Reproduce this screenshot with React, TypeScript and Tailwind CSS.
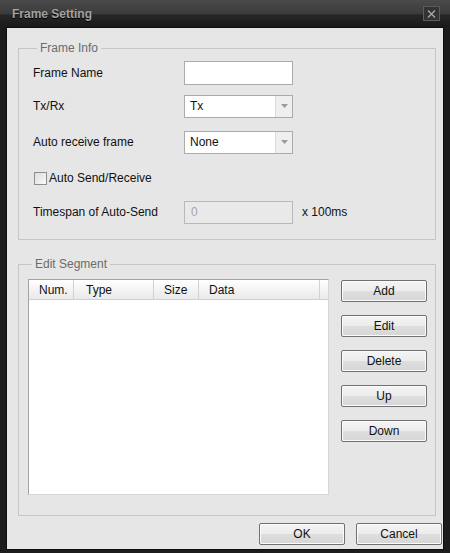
import React, { useState } from "react";

const font = { fontFamily: '"Liberation Sans", Arial, sans-serif' };

function WinButton({ label, className = "" }: { label: string; className?: string }) {
  return (
    <button
      className={`h-[22px] w-[86px] border border-[#707070] rounded-[2px] bg-[linear-gradient(to_bottom,#f4f4f4_0%,#ececec_50%,#dedede_51%,#d6d6d6_100%)] shadow-[inset_0_0_0_1px_#fbfbfb] text-[12px] text-[#111] leading-none ${className}`}
    >
      {label}
    </button>
  );
}

function ComboBox({ value }: { value: string }) {
  return (
    <div className="flex h-[23px] w-[109px] border border-[#ababab] bg-white">
      <span className="flex-1 pl-[5px] text-[12px] leading-[21px] text-[#111]">{value}</span>
      <span className="flex w-[17px] items-center justify-center border-l border-[#dcdcdc] bg-[#efefef]">
        <svg width="7" height="4" viewBox="0 0 7 4">
          <path d="M0 0h7L3.5 4z" fill="#9a9a9a" />
        </svg>
      </span>
    </div>
  );
}

export default function App() {
  const [autoSend, setAutoSend] = useState(false);
  const [name, setName] = useState("");

  return (
    <div className="flex h-[553px] w-[450px] flex-col bg-[#1c1c1c]" style={font}>
      {/* Title bar */}
      <div className="flex h-[27px] items-center justify-between bg-[linear-gradient(to_bottom,#4a4a4a_0%,#3c3c3c_50%,#262626_56%,#1a1a1a_100%)] pl-[12px] pr-[10px]">
        <span className="text-[12px] font-bold text-[#a3a3a3] [text-shadow:0_1px_0_#000]">Frame Setting</span>
        <span className="flex h-[15px] w-[17px] items-center justify-center border border-[#5c5c5c] bg-[#333]">
          <svg width="9" height="8" viewBox="0 0 9 8">
            <path d="M1 0.5l7 7M8 0.5l-7 7" stroke="#a8a8a8" strokeWidth="1.3" />
          </svg>
        </span>
      </div>

      {/* Client area */}
      <div className="mx-[6px] mb-[3px] flex flex-1 flex-col border border-[#0e0e0e] bg-[#e6e6e6] pl-[11px] text-[12px] text-[#111]">
        {/* Frame Info */}
        <fieldset className="mr-[7px] mt-[12px] border border-[#c6c6c6] pb-[16px] pl-[14px]">
          <legend className="ml-[4px] px-[3px] text-[12px] leading-[16px] text-[#6b6b6b]">Frame Info</legend>

          <div className="mt-[5px] flex h-[24px] items-center">
            <span className="w-[151px]">Frame Name</span>
            <input
              value={name}
              onChange={(e) => setName(e.target.value)}
              className="h-[24px] w-[109px] border border-[#ababab] bg-white px-[4px] text-[12px] outline-none"
            />
          </div>

          <div className="mt-[10px] flex h-[22px] items-center">
            <span className="w-[151px]">Tx/Rx</span>
            <ComboBox value="Tx" />
          </div>

          <div className="mt-[14px] flex h-[22px] items-center">
            <span className="w-[151px]">Auto receive frame</span>
            <ComboBox value="None" />
          </div>

          <label className="mt-[15px] flex h-[20px] cursor-pointer items-center pl-[1px]">
            <span
              onClick={() => setAutoSend(!autoSend)}
              className="flex h-[13px] w-[13px] items-center justify-center border border-[#8e8f8f] bg-[linear-gradient(to_bottom_right,#dcdcdc,#fbfbfb)]"
            >
              {autoSend && (
                <svg width="9" height="8" viewBox="0 0 9 8">
                  <path d="M1 4l2.5 2.5L8 1" stroke="#333" strokeWidth="1.5" fill="none" />
                </svg>
              )}
            </span>
            <span className="ml-[2px]">Auto Send/Receive</span>
          </label>

          <div className="mt-[13px] flex h-[22px] items-center">
            <span className="w-[151px]">Timespan of Auto-Send</span>
            <input
              disabled
              value="0"
              readOnly
              className="h-[23px] w-[109px] border border-[#b9b9b9] bg-[#e9e9e9] px-[6px] text-[12px] text-[#a6a6a6] outline-none"
            />
            <span className="ml-[9px]">x 100ms</span>
          </div>
        </fieldset>

        {/* Edit Segment */}
        <fieldset className="mr-[7px] mt-[16px] border border-[#c6c6c6] pb-[20px] pl-[9px] pr-[8px]">
          <legend className="ml-[4px] px-[3px] text-[12px] leading-[16px] text-[#6b6b6b]">Edit Segment</legend>

          <div className="mt-[7px] flex items-start justify-between">
            <div className="flex h-[216px] w-[301px] flex-col border border-[#a3a3a3] border-b-[#d6d6d6] border-r-[#d6d6d6] bg-white">
              <div className="flex h-[20px] items-center border-b border-[#cfcfcf] bg-[linear-gradient(to_bottom,#ffffff,#e9e9e9)] text-[12px]">
                <span className="h-full w-[45px] border-r border-[#d2d2d2] pl-[10px] leading-[20px]">Num.</span>
                <span className="h-full w-[80px] border-r border-[#d2d2d2] pl-[12px] leading-[20px]">Type</span>
                <span className="h-full w-[45px] border-r border-[#d2d2d2] pl-[10px] leading-[20px]">Size</span>
                <span className="h-full w-[121px] border-r border-[#d2d2d2] pl-[10px] leading-[20px]">Data</span>
                <span className="h-full flex-1" />
              </div>
              <div className="flex-1" />
            </div>

            <div className="mt-[1px] flex flex-col gap-[13px]">
              <WinButton label="Add" />
              <WinButton label="Edit" />
              <WinButton label="Delete" />
              <WinButton label="Up" />
              <WinButton label="Down" />
            </div>
          </div>
        </fieldset>

        <div className="mt-[7px] flex justify-end gap-[11px] pr-[1px]">
          <WinButton label="OK" />
          <WinButton label="Cancel" />
        </div>
      </div>
    </div>
  );
}
